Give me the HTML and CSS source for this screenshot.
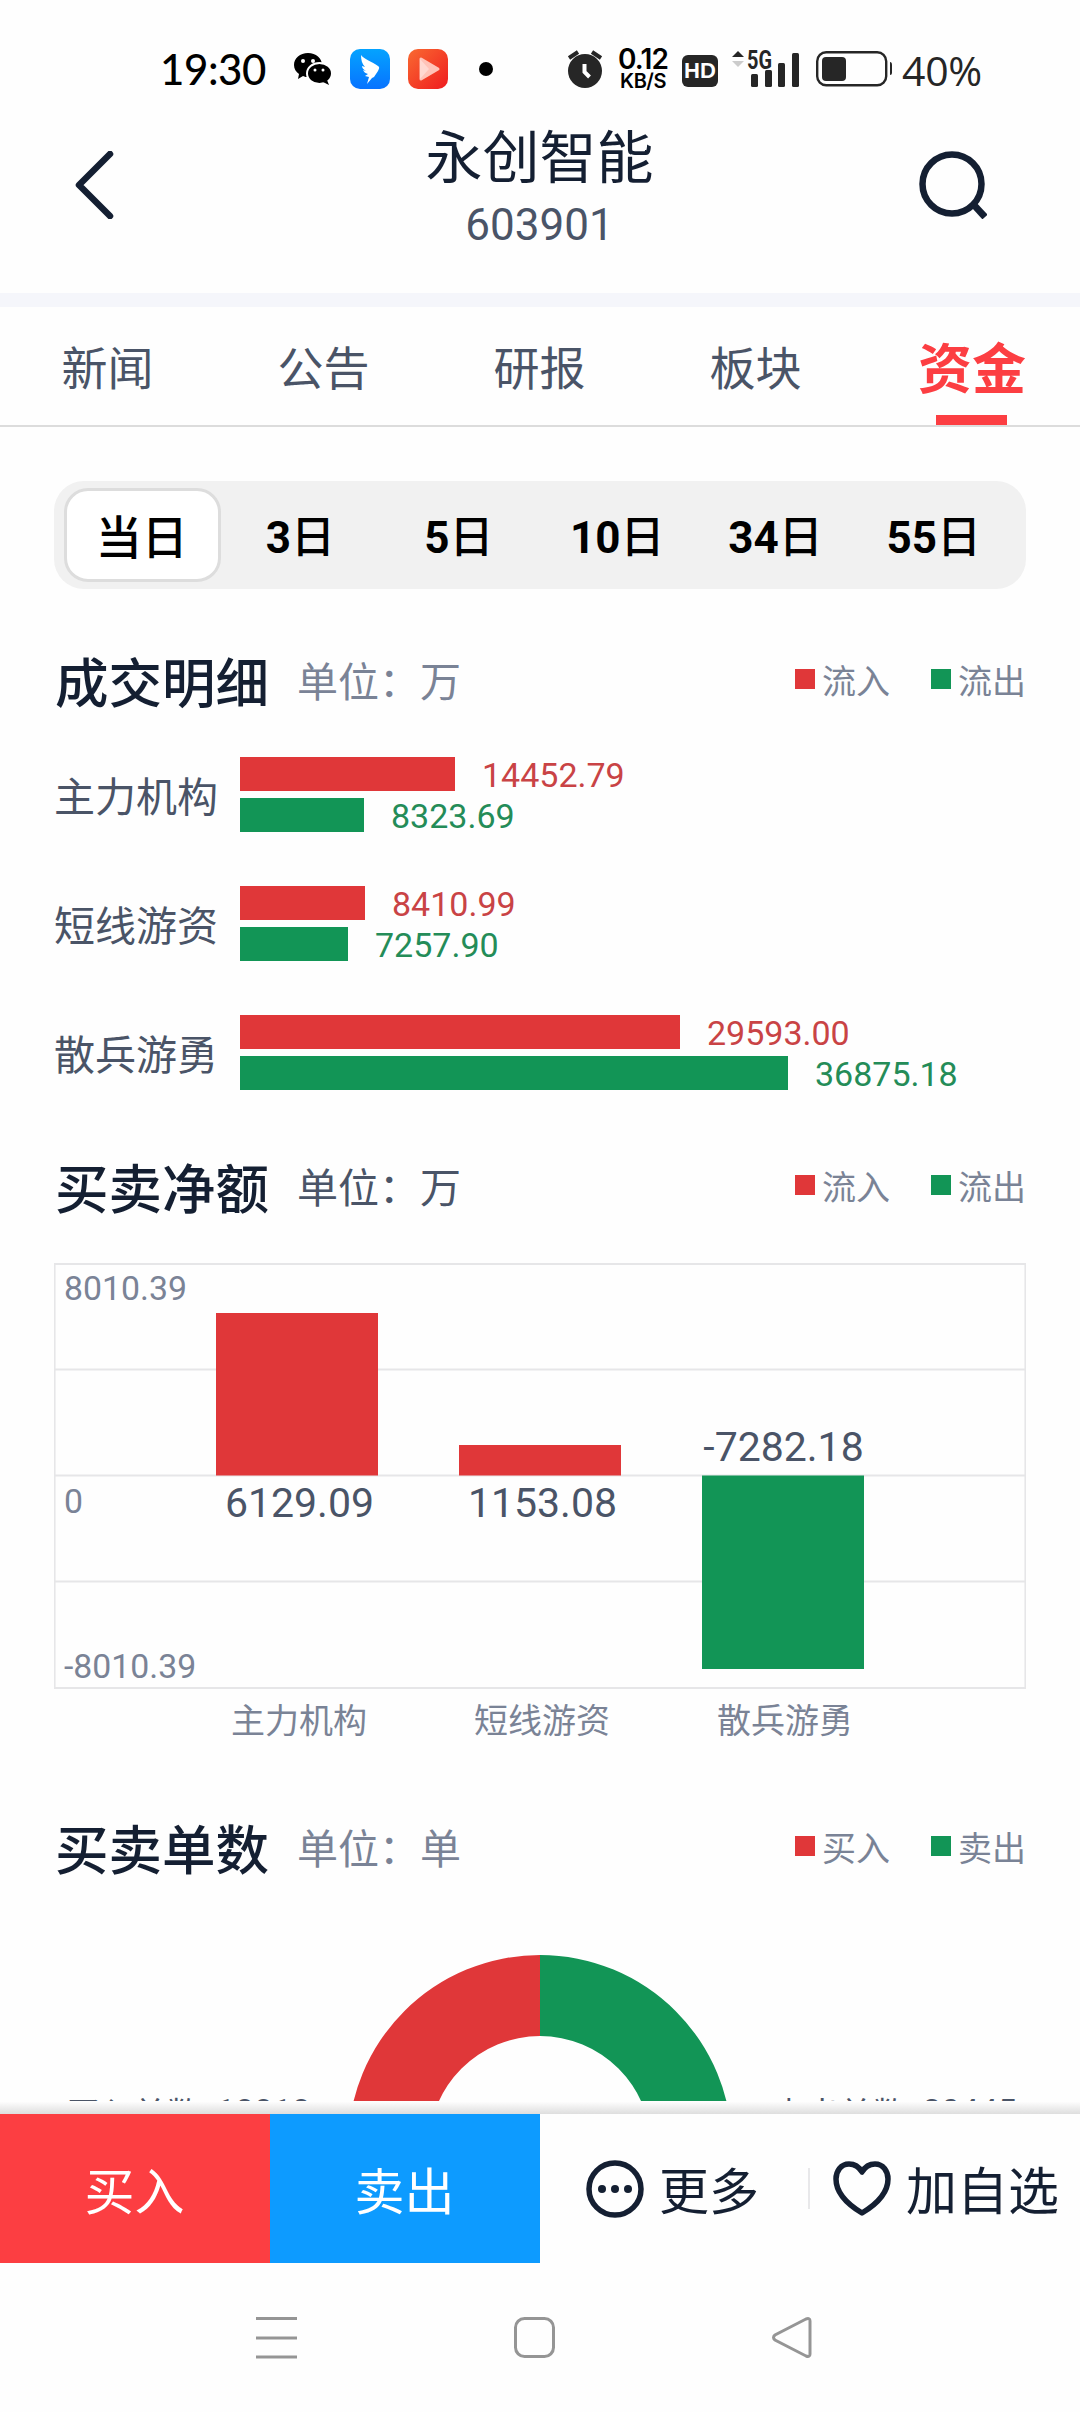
FILE: index.html
```html
<!DOCTYPE html>
<html lang="zh-CN">
<head>
<meta charset="utf-8">
<title>永创智能 603901</title>
<link rel="stylesheet" href="styles.css">
</head>
<body>
<div class="status">
  <span class="time">19:30</span>
  <svg class="wechat" width="38" height="32" viewBox="0 0 38 32"><path d="M14 0C6 0 0 5 0 12c0 4 2 7 5 9l-1 5 5-3c2 1 3 1 5 1 8 0 14-5 14-12S22 0 14 0Z"/><ellipse class="halo" cx="25.5" cy="20.500" rx="12.500" ry="10.500"/><path d="M33 27l2 5-6-3Z"/><g fill="#fff"><circle cx="9" cy="8" r="2"/><circle cx="19" cy="8" r="2"/><circle cx="21" cy="17" r="1.500"/><circle cx="29" cy="17" r="1.500"/></g></svg>
  <svg class="ding" width="40" height="40" viewBox="0 0 40 40"><defs><linearGradient id="blue" x2="0" y2="1"><stop stop-color="#04a3ff"/><stop offset="1" stop-color="#0873ff"/></linearGradient></defs><rect width="40" height="40" rx="10" fill="url(#blue)"/><path d="M11 6c3 4 10 6 17 11 2 1 1 3 0 5l-4 6-2 1-5 6 2-7-4-1 3-2c-3-1-4-2-5-4l3 1c-3-2-4-3-4-5l3 1c-3-3-4-7-4-12Z" fill="#fff"/></svg>
  <svg class="play" width="40" height="40" viewBox="0 0 40 40"><defs><linearGradient id="red" x2="1" y2="1"><stop stop-color="#f96a31"/><stop offset="1" stop-color="#ef1b1f"/></linearGradient></defs><rect width="40" height="40" rx="10" fill="url(#red)"/><path d="M13 10v20l17-10Z" fill="#ffc3b8" stroke="#ffc3b8" stroke-width="3" stroke-linejoin="round"/><path d="M12 10v20l9-10Z" fill="#fff" opacity=".35"/></svg>
  <span class="dot"></span>
  <svg class="alarm" width="36" height="38" viewBox="0 0 36 38"><circle cx="18" cy="21" r="17"/><path d="M2 8l9-6M34 8l-9-6" stroke="#262626" stroke-width="4"/><path d="M17.500 14v8l5 5" fill="none" stroke="#fff" stroke-width="4"/></svg>
  <span class="speed"><b>0.12</b><i>KB/S</i></span>
  <span class="hd">HD</span>
  <svg class="signal" width="67" height="37" viewBox="0 0 67 37"><path d="M0 6l6-6 6 6Z"/><path d="M0 10h12l-6 6Z" fill="#ccc"/><text x="15" y="17.500" textLength="25" lengthAdjust="spacingAndGlyphs">5G</text><rect x="19" y="23" width="7" height="13" rx="1.500"/><rect x="33" y="19" width="7" height="17" rx="1.500"/><rect x="46" y="12" width="7" height="24" rx="1.500"/><rect x="60" y="2" width="7" height="34" rx="1.500"/></svg>
  <svg class="battery" width="76" height="36" viewBox="0 0 76 36"><rect x="1.200" y="1.200" width="69" height="33" rx="9" fill="none" stroke="#262626" stroke-width="2.400"/><rect x="6" y="6" width="24" height="24" rx="4"/><path d="M74 11q2 0 2 3v8q0 2-2 2Z"/></svg>
  <span class="percent">40%</span>
</div>
<header class="header">
  <svg width="40" height="68" viewBox="0 0 40 68"><path d="M35 3L4 34l31 31" fill="none" stroke="#141f32" stroke-width="6.500" stroke-linecap="round" stroke-linejoin="round"/></svg>
  <div class="stock"><h1>永创智能</h1><p>603901</p></div>
  <svg width="68" height="68" viewBox="0 0 68 68"><circle cx="33" cy="33" r="29.500" fill="none" stroke="#141f32" stroke-width="6.500"/><path d="M54 53l12 13" stroke="#141f32" stroke-width="7"/></svg>
</header>
<nav class="tabs"><a>新闻</a><a>公告</a><a>研报</a><a>板块</a><a class="active">资金</a></nav>
<main class="content">
  <div class="segments"><button class="on">当日</button><button><b>3</b>日</button><button><b>5</b>日</button><button><b>10</b>日</button><button><b>34</b>日</button><button><b>55</b>日</button></div>
  <section>
    <div class="heading"><h2>成交明细</h2><span class="unit">单位：万</span><div class="legend"><span class="in">流入</span><span class="out">流出</span></div></div>
    <div class="flows">
      <div class="flow"><span>主力机构</span><div class="pair"><div class="in"><i style="width:215px"></i>14452.79</div><div class="out"><i style="width:124px"></i>8323.69</div></div></div>
      <div class="flow"><span>短线游资</span><div class="pair"><div class="in"><i style="width:125px"></i>8410.99</div><div class="out"><i style="width:108px"></i>7257.90</div></div></div>
      <div class="flow"><span>散兵游勇</span><div class="pair"><div class="in"><i style="width:440px"></i>29593.00</div><div class="out"><i style="width:548px"></i>36875.18</div></div></div>
    </div>
  </section>
  <section>
    <div class="heading"><h2>买卖净额</h2><span class="unit dark">单位：万</span><div class="legend"><span class="in">流入</span><span class="out">流出</span></div></div>
    <svg class="net" width="972" height="492" viewBox="0 0 972 492">
      <path d="M0 1h972M0 106.500h972M0 212.500h972M0 318.500h972M0 425h972" stroke="#e6e6e8" stroke-width="2"/>
      <path d="M.8 0v426M971.200 0v426" stroke="#e6e6e8" stroke-width="1.600"/>
      <rect x="162" y="50" width="162" height="162.500" fill="#e03739"/><rect x="405" y="182" width="162" height="30.500" fill="#e03739"/><rect x="648" y="212.500" width="162" height="193.500" fill="#129556"/>
      <g class="scale"><text x="10" y="37">8010.39</text><text x="10" y="250">0</text><text x="10" y="415">-8010.39</text></g>
      <g class="amount"><text x="245.500" y="254">6129.09</text><text x="488.500" y="254">1153.08</text><text x="729.500" y="198">-7282.18</text></g>
      <g class="names"><text x="245" y="470">主力机构</text><text x="488" y="470">短线游资</text><text x="731" y="470">散兵游勇</text></g>
    </svg>
  </section>
  <section class="orders">
    <div class="heading"><h2>买卖单数</h2><span class="unit">单位：单</span><div class="legend"><span class="in">买入</span><span class="out">卖出</span></div></div>
    <div class="donut"><p>买入单数: <span>18818</span></p>
      <svg width="384" height="384" viewBox="0 0 384 384"><path d="M192 0A192 192 0 0 0 192 384V303A111 111 0 0 1 192 81Z" fill="#e03739"/><path d="M192 0A192 192 0 0 1 192 384V303A111 111 0 0 0 192 81Z" fill="#129556"/></svg>
      <p>卖出单数: <span>20445</span></p></div>
  </section>
</main>
<div class="shade"></div>
<footer class="actions">
  <button class="buy">买入</button><button class="sell">卖出</button>
  <div class="more"><svg width="58" height="58" viewBox="0 0 58 58"><circle cx="29" cy="29" r="26" fill="none" stroke="#141f32" stroke-width="5.500"/><g fill="#141f32"><circle cx="16" cy="29" r="4"/><circle cx="29" cy="29" r="4"/><circle cx="42" cy="29" r="4"/></g></svg><span>更多</span></div>
  <div class="fav"><svg width="58" height="56" viewBox="0 0 58 56"><path d="M29 11C25 4 20 3 16 3 8 3 3 10 3 18c0 13 11 25 26 34 15-9 26-21 26-34C55 10 50 3 42 3c-4 0-9 1-13 8Z" fill="none" stroke="#141f32" stroke-width="5.500" stroke-linejoin="round"/></svg><span>加自选</span></div>
</footer>
<div class="system">
  <svg width="42" height="42" viewBox="0 0 42 42"><path d="M0 1.500h41M0 21h41M0 40h41"/></svg>
  <svg width="42" height="42" viewBox="0 0 42 42"><rect x="1.500" y="1.500" width="38" height="38" rx="9"/></svg>
  <svg width="42" height="42" viewBox="0 0 42 42"><path d="M34 2L3 18q-3 2.500 0 5L34 39q4 1.500 4-2V4q0-3.500-4-2Z"/></svg>
</div>
</body>
</html>
```
FILE: styles.css
```css
* { box-sizing: border-box; margin: 0; padding: 0; }
body { width: 1080px; height: 2412px; overflow: hidden; display: flex; flex-direction: column; background: #fefefe; color: #4a5467; font-family: Roboto, "Noto Sans CJK SC", sans-serif; }
svg { display: block; flex: none; }
button { border: 0; background: none; font-family: inherit; }
i { font-style: normal; }
.status { height: 110px; flex: none; display: flex; align-items: center; padding: 28px 0 0 160px; color: #000; }
.status svg { fill: #262626; }
.time { width: 134px; font: 500 42px/50px Lato, sans-serif; letter-spacing: -0.4px; white-space: nowrap; }
.status .wechat { fill: #000; }
.halo { stroke: #fff; stroke-width: 2px; }
.ding { margin-left: 18px; }
.play { margin-left: 18px; }
.dot { width: 14px; height: 14px; margin-left: 31px; border-radius: 50%; background: #000; }
.alarm { margin-left: 74px; }
.speed { width: 52px; margin: 0 0 0 14px; display: flex; flex-direction: column; align-items: center; font-family: Inter, sans-serif; }
.speed b { font-size: 28px; line-height: 24px; font-weight: 600; letter-spacing: -0.8px; }
.speed i { font-size: 20px; line-height: 20px; font-weight: 600; letter-spacing: -0.5px; }
.hd { width: 36px; height: 32px; margin: 3px 0 0 13px; border-radius: 6px; background: #262626; color: #fff; font: 700 22px/32px "Liberation Sans", sans-serif; text-align: center; }
.signal { margin-left: 14px; overflow: visible; }
.signal text { font: 700 25px Roboto, sans-serif; }
.battery { margin-left: 17px; }
.percent { margin: 1px 0 0 10px; color: #262626; font: 500 41px/50px "Open Sans", sans-serif; letter-spacing: -0.3px; }
.header { height: 183px; flex: none; display: flex; justify-content: space-between; align-items: flex-start; padding: 41px 93px 0 75px; }
.stock { width: 300px; margin: -33px 0 0 45px; text-align: center; }
.stock h1 { color: #141f32; font-size: 57px; font-weight: 400; line-height: 82px; white-space: nowrap; }
.stock p { font-size: 44px; line-height: 52px; margin-top: -1px; }
.tabs { height: 134px; flex: none; display: flex; border-top: 14px solid #f5f6fb; border-bottom: 2px solid #dcdcdc; }
.tabs a { width: 216px; display: flex; justify-content: center; align-items: center; padding: 0 1px 2px 0; font-size: 46px; }
.tabs .active { position: relative; padding-right: 0; color: #fc3e42; font-size: 54px; font-weight: 700; }
.active::after { content: ""; position: absolute; left: 72px; bottom: 0; width: 71px; height: 10px; background: #fc3e42; }
.content { height: 1674px; flex: none; overflow: hidden; padding: 54px 54px 0; }
.segments { height: 108px; display: grid; grid-template-columns: repeat(6, 1fr); padding: 7px 13px 7px 9px; border-radius: 30px; background: #f1f1f1; }
.segments button { padding-bottom: 3px; color: #000; font-size: 44px; font-weight: 500; }
.segments .on { margin-left: 1px; padding-right: 2px; border: 3px solid #ddd; border-radius: 24px; background: #fff; font-size: 46px; }
.heading { display: flex; height: 80px; align-items: center; }
.heading h2 { width: 243px; padding-left: 1px; color: #141f32; font-size: 53.5px; font-weight: 500; white-space: nowrap; }
.unit { color: #7a8396; font-size: 41px; }
.unit.dark { color: #4a5467; }
.legend { margin-left: auto; display: flex; gap: 41px; color: #7a8396; font-size: 34px; }
.legend span { display: flex; align-items: center; gap: 7px; }
.legend span::before { content: ""; width: 20px; height: 20px; background: #e03739; }
.legend .out::before { background: #129556; }
section:first-of-type { padding-top: 50px; height: 556px; }
.flows { margin-top: 38px; display: flex; flex-direction: column; gap: 54px; }
.flow { height: 75px; display: flex; align-items: center; }
.flow > span { width: 186px; padding-bottom: 1px; font-size: 41px; }
.pair { display: flex; flex-direction: column; gap: 7px; }
.pair div { height: 34px; display: flex; align-items: center; font-size: 34px; line-height: 36px; padding-top: 1px; }
.pair i { height: 34px; margin: -1px 27px 0 0; background: currentColor; }
.pair .in { color: #c94345; }
.pair .in i { background: #e03739; }
.pair .out { color: #248c58; }
.pair .out i { background: #129556; }
.net { margin-top: 38px; }
.scale { fill: #7a8396; font-size: 33.8px; }
.amount { fill: #4a5467; font-size: 41px; text-anchor: middle; }
.names { fill: #7a8396; font-size: 34px; text-anchor: middle; }
.orders { padding-top: 51px; }
.donut { margin-top: 69px; display: flex; justify-content: space-between; padding: 0 12px; }
.donut p { width: 246px; padding-top: 132px; font-size: 33.5px; white-space: nowrap; }
.donut p:last-child { padding-left: 4px; }
.donut p span { vertical-align: 3px; }
.shade { height: 13px; flex: none; background: linear-gradient(#fff, #dedede); }
.actions { height: 149px; flex: none; display: flex; color: #141f32; font-size: 50px; }
.actions button { width: 270px; padding: 0 1px 2px 0; color: #fff; font-size: 50px; }
.actions span { padding-bottom: 2px; }
.buy { background: #fc3e42; }
.sell { background: #0d9bff; }
.more, .fav { display: flex; align-items: center; }
.more { width: 268px; padding-left: 46px; gap: 15px; }
.fav { gap: 15px; padding-left: 25px; font-size: 51px; white-space: nowrap; background: linear-gradient(#e8e8ea, #e8e8ea) 0 54px / 2px 41px no-repeat; }
.system { height: 149px; flex: none; display: flex; padding: 54px 0 0 256px; gap: 216px; }
.system svg { fill: none; stroke: #959595; stroke-width: 3px; }
```
